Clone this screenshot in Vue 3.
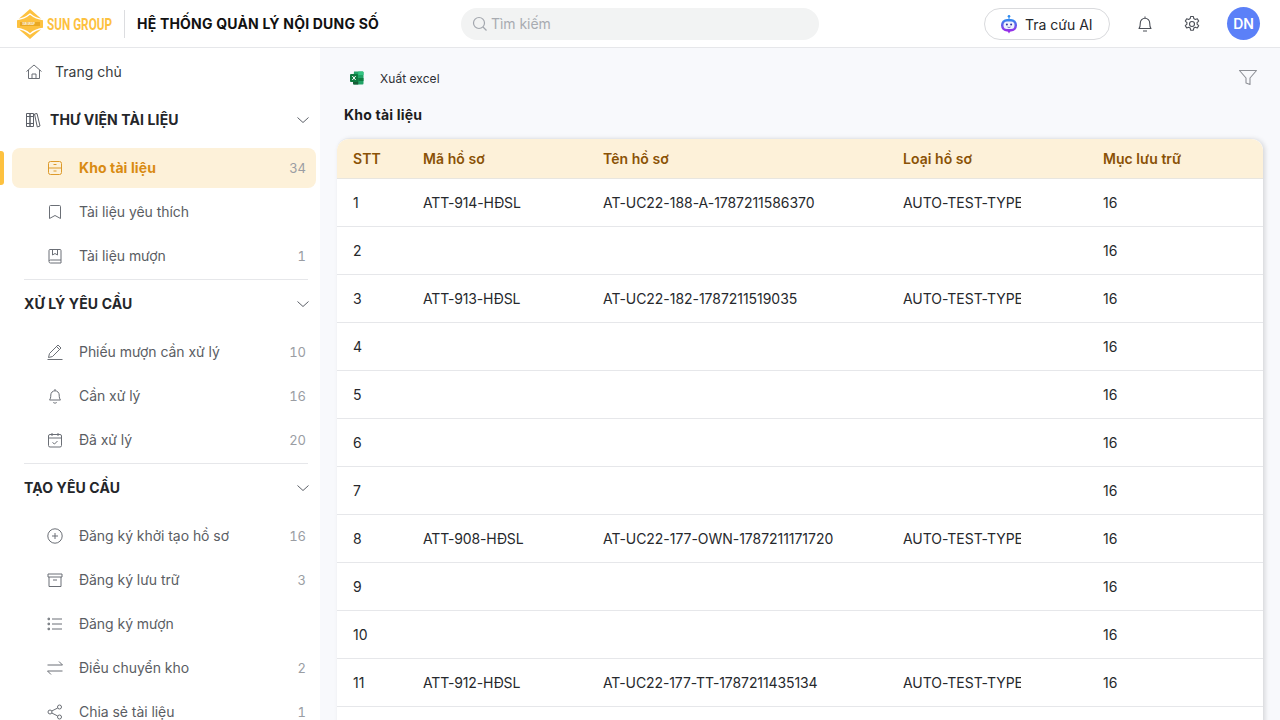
<script setup>
const groups = [
  { title: 'THƯ VIỆN TÀI LIỆU', icon: 'lib', items: [
    { label: 'Kho tài liệu', icon: 'drawer', count: 34, active: true },
    { label: 'Tài liệu yêu thích', icon: 'bookmark' },
    { label: 'Tài liệu mượn', icon: 'book', count: 1 },
  ]},
  { title: 'XỬ LÝ YÊU CẦU', items: [
    { label: 'Phiếu mượn cần xử lý', icon: 'pen', count: 10 },
    { label: 'Cần xử lý', icon: 'bell', count: 16 },
    { label: 'Đã xử lý', icon: 'cal', count: 20 },
  ]},
  { title: 'TẠO YÊU CẦU', items: [
    { label: 'Đăng ký khởi tạo hồ sơ', icon: 'plus', count: 16 },
    { label: 'Đăng ký lưu trữ', icon: 'archive', count: 3 },
    { label: 'Đăng ký mượn', icon: 'list' },
    { label: 'Điều chuyển kho', icon: 'swap', count: 2 },
    { label: 'Chia sẻ tài liệu', icon: 'share', count: 1 },
  ]},
]
const icons = {
  drawer: 'M4.500 2.500h9a2 2 0 0 1 2 2v9a2 2 0 0 1-2 2h-9a2 2 0 0 1-2-2v-9a2 2 0 0 1 2-2zM2.500 9h13M7.500 5.500h3M7.500 12h3',
  bookmark: 'M4.500 2.500h9a1 1 0 0 1 1 1v12L9 12.500l-5.500 3v-12a1 1 0 0 1 1-1z',
  book: 'M3 14V3.500a1 1 0 0 1 1-1h10a1 1 0 0 1 1 1v9.500H4.500a1.500 1.500 0 0 0-1.500 1.500 1.500 1.500 0 0 0 1.500 1.500H15v-3M6.500 2.500V8L9 6.500 11.500 8V2.500',
  pen: 'M2.500 14.500l1-4L12 2l3 3-8.500 8.500zM10.500 3.500l3 3M1.500 16.500h15',
  bell: 'M3.500 13c.8-1 1.300-2.300 1.300-5a4.200 4.200 0 0 1 8.400 0c0 2.700.5 4 1.300 5zM7.300 15.500c1 .8 2.400.8 3.400 0M9 2v1.800',
  cal: 'M4 3.500h10a1.500 1.500 0 0 1 1.500 1.500v9.500A1.500 1.500 0 0 1 14 16H4a1.500 1.500 0 0 1-1.500-1.500V5A1.500 1.500 0 0 1 4 3.500zM2.500 7h13M6 2v3M12 2v3M6.500 11.500l2 1.500 3-3',
  plus: 'M9 1.800a7.200 7.200 0 1 1 0 14.400 7.200 7.200 0 0 1 0-14.400zM9 6v6M6 9h6',
  archive: 'M2 3h14v3H2zM3 6v9.500h12V6M7 9h4',
  list: 'M6 4h10M6 9h10M6 14h10M2 3.200h1.500v1.500H2zM2 8.200h1.500v1.500H2zM2 13.200h1.500v1.500H2z',
  swap: 'M1.500 6h15l-3.500-3.500M16.500 12h-15L5 15.500',
  share: 'M6 9a2 2 0 1 1-4 0 2 2 0 0 1 4 0zM15.500 4a2 2 0 1 1-4 0 2 2 0 0 1 4 0zM15.500 14a2 2 0 1 1-4 0 2 2 0 0 1 4 0zM5.800 8l5.900-3M5.800 10l5.900 3',
}
const rows = [
  { code: 'ATT-914-HĐSL', name: 'AT-UC22-188-A-1787211586370', type: 'AUTO-TEST-TYPE' },
  {},
  { code: 'ATT-913-HĐSL', name: 'AT-UC22-182-1787211519035', type: 'AUTO-TEST-TYPE' },
  {}, {}, {}, {},
  { code: 'ATT-908-HĐSL', name: 'AT-UC22-177-OWN-1787211171720', type: 'AUTO-TEST-TYPE' },
  {}, {},
  { code: 'ATT-912-HĐSL', name: 'AT-UC22-177-TT-1787211435134', type: 'AUTO-TEST-TYPE', tight: true },
  {},
]
</script>

<template>
  <div class="app">
    <header class="topbar">
      <div class="brand">
        <svg class="logo" width="96" height="30" viewBox="0 0 96 30">
          <path d="M13 0l12 10.500h1v9h-1L13 30 1 19.500H0v-9h1z" fill="#fdc13f"/>
          <path d="M0 10.500Q7 10 13 5q6 5 13 5.500M0 19.500q7 .5 13 5.500 6-5 13-5.500" fill="none" stroke="#fff" stroke-width="1.300"/>
          <path d="M3 13h20v4H3z" fill="#e9a823"/>
          <text class="logo-mini" transform="translate(5.500 16.100) scale(.75 1)">SUN GROUP</text>
          <text class="logo-text" transform="translate(30 21) scale(.69 1)">SUN GROUP</text>
        </svg>
        <span class="brand-sep"></span>
        <span class="brand-title">HỆ THỐNG QUẢN LÝ NỘI DUNG SỐ</span>
      </div>
      <div class="search">
        <svg width="16" height="16" viewBox="0 0 16 16" fill="none" stroke="#a3a7ae" stroke-width="1.200"><circle cx="7" cy="7" r="5.500"/><path d="M11 11l3.500 3.500"/></svg>
        <span>Tìm kiếm</span>
      </div>
      <div class="actions">
        <button class="ai-btn">
          <svg width="18" height="20" viewBox="0 0 18 20">
            <defs><linearGradient id="aig" x1="0" y1="0" x2="0" y2="1"><stop offset="0" stop-color="#2f8cf0"/><stop offset="1" stop-color="#9a2be8"/></linearGradient></defs>
            <circle cx="9" cy="2.300" r="1.300" fill="#2f8cf0"/>
            <path d="M9 3v3" stroke="#2f8cf0"/>
            <rect x="1" y="5" width="16" height="12.500" rx="6" fill="url(#aig)"/>
            <path d="M7.500 17h3L9 19.500z" fill="#9a2be8"/>
            <rect x="3.500" y="7.500" width="11" height="7.500" rx="3.500" fill="#eef2fd"/>
            <circle cx="6.900" cy="10.500" r="1" fill="#3730a3"/><circle cx="11.100" cy="10.500" r="1" fill="#3730a3"/>
            <path d="M7.500 13c1 .6 2 .6 3 0" stroke="#3730a3" stroke-width=".7" fill="none"/>
          </svg>
          <span class="ai-label">Tra cứu AI</span>
        </button>
        <svg class="act-icon" width="18" height="18" viewBox="0 0 18 18" fill="none" stroke="#4b4f57" stroke-width="1.100"><path d="M3 13.500c1-1.200 1.300-2.500 1.300-5.500a4.700 4.700 0 0 1 9.400 0c0 3 .3 4.300 1.300 5.500zM7 16h4M9 1.500v1.800" stroke-linejoin="round"/></svg>
        <svg class="act-icon" width="18" height="18" viewBox="0 0 18 18" fill="none" stroke="#4b4f57" stroke-width="1.100"><circle cx="9" cy="9" r="2.500"/><path d="M7.600 1.500h2.800l.4 2.100 1.500.8 2-.7 1.400 2.400-1.600 1.400v1.700l1.600 1.400-1.400 2.400-2-.7-1.500.8-.4 2.100H7.600l-.4-2.100-1.500-.8-2 .7-1.400-2.400 1.600-1.400V7.500L2.300 6.100l1.400-2.400 2 .7 1.500-.8z" stroke-linejoin="round"/></svg>
        <div class="avatar">DN</div>
      </div>
    </header>

    <div class="body">
      <aside class="sidebar">
        <div class="home">
          <svg width="18" height="18" viewBox="0 0 18 18" fill="none" stroke="#6b6f76" stroke-width="1"><path d="M1.500 8.500L9 2l7.500 6.500M3.500 7v8.500h11V7M7 15.500V11h4v4.500"/></svg>
          <span>Trang chủ</span>
        </div>
        <section v-for="(g, gi) in groups" :key="g.title" class="group">
          <div class="group-head">
            <svg v-if="g.icon" class="lib" width="18" height="18" viewBox="0 0 18 18" fill="none" stroke="#5c6068" stroke-width="1"><path d="M2.500 2.500h3.500v13H2.500zM6 2.500h3.500v13H6zM2.500 5.500H6M6 5.500h3.500M2.500 12.500h7M10.500 3l2.500-.5 3 12.500-2.700 1z"/></svg>
            <span class="group-title">{{ g.title }}</span>
            <svg class="chev" width="14" height="8" viewBox="0 0 14 8" fill="none" stroke="#5c6068" stroke-width="1"><path d="M1.500 1.500L7 6.500l5.500-5"/></svg>
          </div>
          <div class="list">
            <div v-for="it in g.items" :key="it.label" class="item" :class="{ active: it.active }">
              <svg class="ic" width="18" height="18" viewBox="0 0 18 18" fill="none" :stroke="it.active ? '#dd9a2b' : '#6b6f76'" stroke-width="1"><path :d="icons[it.icon]"/></svg>
              <span class="item-label">{{ it.label }}</span>
              <span class="count">{{ it.count }}</span>
            </div>
          </div>
          <div v-if="gi < groups.length - 1" class="divider"></div>
        </section>
      </aside>

      <main class="main">
        <div class="toolbar">
          <div class="export">
            <svg width="16" height="16" viewBox="0 0 16 16">
              <path d="M5 1.500h8.500a1 1 0 0 1 1 1v11a1 1 0 0 1-1 1H5a1 1 0 0 1-1-1z" fill="#21a366"/>
              <path d="M9.250 1.500h4.250a1 1 0 0 1 1 1V5H9.250z" fill="#33c481"/>
              <path d="M9.250 8h5.250v3H9.250z" fill="#107c41"/>
              <path d="M4 11h5.250v3.500H5a1 1 0 0 1-1-1z" fill="#185c37"/>
              <rect x="1" y="4" width="8" height="8" rx="1" fill="#0e7a3f"/>
              <path d="M3.300 6l3.400 4M6.700 6l-3.400 4" stroke="#fff" stroke-width="1"/>
            </svg>
            <span>Xuất excel</span>
          </div>
          <svg width="20" height="18" viewBox="0 0 20 18" fill="none" stroke="#8d9096" stroke-width="1.100"><path d="M1.500 1.500h17l-6.500 7.500v6.500l-4-1.500V9z" stroke-linejoin="round"/></svg>
        </div>
        <h1 class="heading">Kho tài liệu</h1>
        <div class="table">
          <div class="tr th">
            <div>STT</div><div>Mã hồ sơ</div><div>Tên hồ sơ</div><div>Loại hồ sơ</div><div>Mục lưu trữ</div>
          </div>
          <div v-for="(r, i) in rows" :key="i" class="tr td">
            <div>{{ i + 1 }}</div>
            <div class="code">{{ r.code }}</div>
            <div :class="{ tight: r.tight }">{{ r.name }}</div>
            <div><span class="clip">{{ r.type }}</span></div>
            <div>16</div>
          </div>
        </div>
      </main>
    </div>
  </div>
</template>

<style>
html, body { margin: 0; height: 100%; overflow: hidden; }
</style>

<style scoped>
.app { width: 1280px; height: 720px; display: flex; flex-direction: column; overflow: hidden; font-family: Inter, "Noto Sans", sans-serif; color: #1f2024; background: #fff; }
.topbar { height: 48px; box-sizing: border-box; flex: none; display: flex; align-items: center; border-bottom: 1px solid #e6e7ea; background: #fff; padding: 0 20px 0 17px; }
.brand { display: flex; align-items: center; width: 444px; }
.logo { display: block; }
.logo-text { font: 700 17px "Roboto", sans-serif; fill: #fdc13f; }
.logo-mini { font: 700 3px "Roboto", sans-serif; fill: #fff; }
.brand-sep { width: 1px; height: 28px; background: #dcdde0; margin: 0 12px 0 11px; }
.brand-title { font-size: 14px; font-weight: 700; letter-spacing: .2px; color: #111; white-space: nowrap; }
.search { width: 358px; height: 32px; box-sizing: border-box; border-radius: 16px; background: #f2f3f3; display: flex; align-items: center; gap: 3px; padding-left: 11px; font-size: 14px; letter-spacing: -.05px; color: #a8abb1; }
.actions { margin-left: auto; display: flex; align-items: center; }
.ai-btn { width: 126px; height: 32px; box-sizing: border-box; border: 1px solid #d9dadd; border-radius: 16px; background: #fff; display: flex; align-items: center; gap: 7px; padding: 0 0 0 15px; font: 400 14px Inter, sans-serif; color: #26282c; }
.ai-label { position: relative; top: 1px; }
.act-icon { margin-left: 26px; }
.act-icon + .act-icon { margin-left: 29px; }
.avatar { width: 33px; height: 33px; border-radius: 50%; background: #5b80f8; color: #fff; font-size: 14px; font-weight: 600; display: flex; align-items: center; justify-content: center; margin-left: 26px; }
.body { flex: 1; display: flex; min-height: 0; }
.sidebar { width: 320px; flex: none; background: #fff; overflow: hidden; }
.home { height: 48px; display: flex; align-items: center; gap: 12px; padding-left: 25px; font-size: 14px; color: #383b40; }
.home span { position: relative; top: -1px; }
.group-head { height: 48px; display: flex; align-items: center; padding: 0 10px 0 24px; font-size: 14px; font-weight: 700; letter-spacing: .12px; color: #24262a; }
.lib { margin-right: 8px; }
.group-title { flex: 1; position: relative; top: -1px; }
.chev { flex: none; }
.list { padding-top: 2px; }
.item { height: 44px; margin: 0 4px 0 12px; box-sizing: border-box; display: flex; align-items: center; padding: 0 10px 0 34px; font-size: 14px; letter-spacing: -.05px; color: #5a5d63; position: relative; }
.ic { margin-right: 15px; flex: none; }
.item-label { flex: 1; position: relative; top: -1px; }
.count { font-size: 13px; color: #9a9da3; font-variant-numeric: tabular-nums; letter-spacing: 0; }
.item.active { height: 40px; margin-top: 2px; margin-bottom: 2px; background: #fdf1d9; border-radius: 8px; color: #d98b12; font-weight: 700; letter-spacing: .1px; }
.item.active .count { font-weight: 400; }
.item.active::before { content: ""; position: absolute; left: -12px; top: 3px; width: 4px; height: 34px; background: #fdc13f; border-radius: 0 3px 3px 0; }
.divider { height: 1px; margin: 1px 12px 0 24px; background: #e6e7ea; }
.main { flex: 1; min-width: 0; background: #f8f9fc; padding: 0 17px; overflow: hidden; }
.toolbar { height: 60px; display: flex; align-items: center; justify-content: space-between; padding: 0 5px 0 12px; }
.export { display: flex; align-items: center; gap: 15px; font-size: 12px; letter-spacing: .05px; color: #2e3035; }
.heading { margin: 0; height: 30px; padding-left: 7px; font-size: 14px; font-weight: 700; line-height: 14px; letter-spacing: .2px; color: #1c1d20; }
.table { background: #fff; border-radius: 12px 12px 0 0; border-top: 1px solid #e6e8ec; box-shadow: 2px 1px 5px rgba(0, 0, 0, .14); width: 926px; }
.tr { display: grid; grid-template-columns: 70px 180px 300px 200px 176px; align-items: center; }
.tr > div { padding-left: 16px; }
.th { height: 40px; box-sizing: border-box; background: #fdf1d9; border-radius: 12px 12px 0 0; border-bottom: 1px solid #e8e6e0; font-size: 14px; font-weight: 600; letter-spacing: .05px; color: #8a5206; }
.td { height: 48px; box-sizing: border-box; border-bottom: 1px solid #e6e7ea; font-size: 14px; letter-spacing: -.04px; color: #26282c; }
.td .code { letter-spacing: -.17px; }
.td .tight { letter-spacing: -.1px; }
.clip { display: block; width: 118px; overflow: hidden; white-space: nowrap; }
</style>
